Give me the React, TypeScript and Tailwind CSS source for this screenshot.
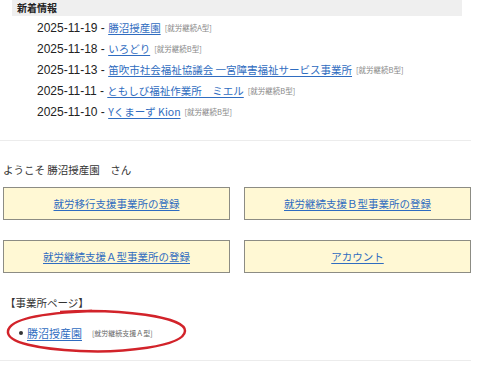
import React from "react";

type News = {
  date: string;
  name: string;
  kind: string;
};

const news: News[] = [
  { date: "2025-11-19", name: "勝沼授産園", kind: "[就労継続A型]" },
  { date: "2025-11-18", name: "いろどり", kind: "[就労継続B型]" },
  { date: "2025-11-13", name: "笛吹市社会福祉協議会 一宮障害福祉サービス事業所", kind: "[就労継続B型]" },
  { date: "2025-11-11", name: "ともしび福祉作業所　ミエル", kind: "[就労継続B型]" },
  { date: "2025-11-10", name: "Yくまーず Kion", kind: "[就労継続B型]" },
];

const menus = [
  "就労移行支援事業所の登録",
  "就労継続支援Ｂ型事業所の登録",
  "就労継続支援Ａ型事業所の登録",
  "アカウント",
];

const jp = "font-['Noto_Sans_CJK_JP',sans-serif]";
const link = "text-[#2f6cc0] underline underline-offset-2 decoration-1";

export default function App() {
  return (
    <div className={`w-[471px] h-[372px] overflow-hidden bg-white text-[#333] ${jp}`}>
      {/* 新着情報 */}
      <div className="ml-[12px] w-[450px] h-[16px] bg-[#efefef] pl-[5px] text-[10px] font-bold leading-[16px] text-[#222]">
        新着情報
      </div>
      <ul className="pl-[37px] pt-[1px]">
        {news.map((n) => (
          <li key={n.date} className="flex h-[21px] items-center whitespace-nowrap">
            <span className="font-['Liberation_Sans',sans-serif] text-[12px] text-[#222]">
              {n.date}&nbsp;-&nbsp;
            </span>
            <a href="#" className={`text-[10.5px] ${link}`}>
              {n.name}
            </a>
            <span className="ml-[4px] text-[7.5px] text-[#888]">{n.kind}</span>
          </li>
        ))}
      </ul>

      <div className="mt-[18px] h-px bg-[#ececec]" />

      {/* ようこそ */}
      <div className="mt-[21px] pl-[3px] text-[10.5px] leading-[16px] text-[#333]">
        ようこそ 勝沼授産園　さん
      </div>

      <div className="mt-[9px] grid grid-cols-[227px_227px] gap-x-[14px] gap-y-[20px] pl-[3px]">
        {menus.map((m) => (
          <div
            key={m}
            className="flex h-[33px] items-center justify-center border border-[#8c8c84] bg-[#fff8d4]"
          >
            <a href="#" className={`text-[10.5px] ${link}`}>
              {m}
            </a>
          </div>
        ))}
      </div>

      {/* 事業所ページ */}
      <div className="relative mt-[22px]">
        <div className="pl-[5px] text-[10.5px] leading-[16px] text-[#333]">
          【事業所ページ】
        </div>
        <ul className="mt-[14px] pl-[19px]">
          <li className="flex h-[16px] items-center whitespace-nowrap">
            <span className="mr-[4px] inline-block h-[4px] w-[4px] rounded-full bg-[#333]" />
            <a href="#" className={`text-[11px] ${link}`}>
              勝沼授産園
            </a>
            <span className="ml-[10px] text-[7px] text-[#666]">[就労継続支援Ａ型]</span>
          </li>
        </ul>
        <svg
          className="pointer-events-none absolute left-0 top-0"
          width="200"
          height="64"
          viewBox="0 0 200 64"
        >
          <path
            d="M60 17 C 120 13, 186 22, 185 36 C 184 52, 120 58, 80 56 C 40 54, 6 48, 8 36 C 10 24, 40 18, 92 16"
            fill="none"
            stroke="#d2232a"
            strokeWidth="2.5"
          />
        </svg>
      </div>

      <div className="mt-[19px] h-px bg-[#ececec]" />
    </div>
  );
}
